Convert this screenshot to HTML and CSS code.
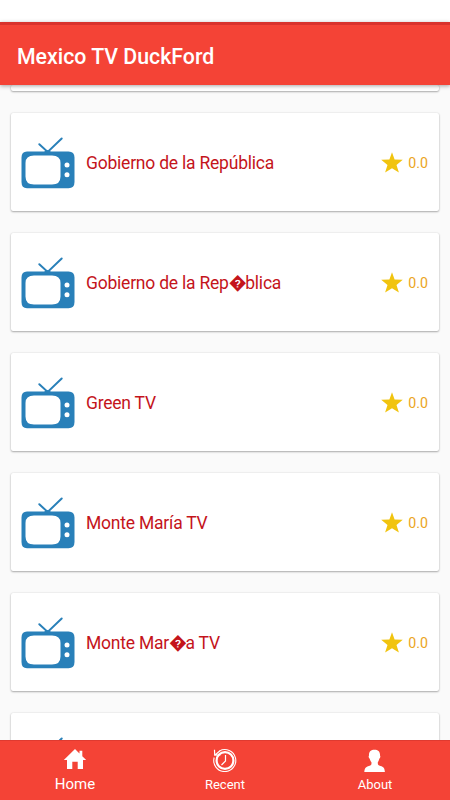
FILE: index.html
```html
<!DOCTYPE html>
<html lang="es">
<head>
<meta charset="utf-8">
<title>Mexico TV DuckFord</title>
<link rel="stylesheet" href="styles.css">
</head>
<body>
<svg class="defs" width="0" height="0" aria-hidden="true">
  <symbol id="tv" viewBox="0 0 54 52">
    <path d="M18.300 7.300 26.700 15 40.700 1.500" fill="none" stroke="#2980b9" stroke-width="2" stroke-linecap="round"/>
    <path fill="#2980b9" fill-rule="evenodd" d="M23 14.500 26.700 13 30 14.500H47.500Q53.500 14.500 53.500 20.500V45Q53.500 51.200 47.500 51.200H6Q.5 51.200 .5 45V20.500Q.5 14.500 6 14.500ZM13 18.500Q4.500 18.500 4.500 26V39.500Q4.500 47.500 13 47.500H31Q39.500 47.500 39.500 39.500V26Q39.500 18.500 31 18.500Z"/>
    <circle cx="46" cy="28" r="2.500" fill="#fff"/>
    <circle cx="46" cy="37.700" r="2.500" fill="#fff"/>
  </symbol>
  <symbol id="star" viewBox="0 0 22 21">
    <path fill="#f1c40f" d="M11 .3 13.600 7.600 21.800 7.800 15.500 12.900 17.900 20.600 11 16.200 4.100 20.600 6.500 12.900 .2 7.800 8.400 7.600Z"/>
  </symbol>
</svg>
<div class="app">
  <div class="status"></div>
  <header class="toolbar"><h1>Mexico TV DuckFord</h1></header>
  <main class="list">
    <article class="card card-prev"></article>
    <article class="card"><svg class="tv"><use href="#tv"/></svg><h2>Gobierno de la República</h2><svg class="star"><use href="#star"/></svg><span class="score">0.0</span></article>
    <article class="card"><svg class="tv"><use href="#tv"/></svg><h2>Gobierno de la Rep<span class="unknown">&#xFFFD;</span>blica</h2><svg class="star"><use href="#star"/></svg><span class="score">0.0</span></article>
    <article class="card"><svg class="tv"><use href="#tv"/></svg><h2>Green TV</h2><svg class="star"><use href="#star"/></svg><span class="score">0.0</span></article>
    <article class="card"><svg class="tv"><use href="#tv"/></svg><h2>Monte María TV</h2><svg class="star"><use href="#star"/></svg><span class="score">0.0</span></article>
    <article class="card"><svg class="tv"><use href="#tv"/></svg><h2>Monte Mar<span class="unknown">&#xFFFD;</span>a TV</h2><svg class="star"><use href="#star"/></svg><span class="score">0.0</span></article>
    <article class="card"><svg class="tv"><use href="#tv"/></svg></article>
  </main>
  <nav class="tabs">
    <div class="tab active">
      <svg class="tab-icon" viewBox="0 0 24 24"><path fill="#fff" d="M12 1 16.500 5.400V2.700H19.300V8.200L23.200 12H20V21H14.700V13.700H9.300V21H4V12H.8Z"/></svg>
      <span>Home</span>
    </div>
    <div class="tab">
      <svg class="tab-icon" viewBox="0 0 24 24" fill="none" stroke="#fff"><path stroke-width="1.100" d="M6.500 2.900A11 11 0 1 1 1.200 9.500"/><circle cx="12" cy="12.500" r="8.400" stroke-width="2.200"/><path stroke-width="1.200" d="M1.500 1.800 1.700 7.200 7.500 7M2 7 7 2.800M12.500 7V13L8.500 17"/></svg>
      <span>Recent</span>
    </div>
    <div class="tab">
      <svg class="tab-icon" viewBox="0 0 24 24"><path fill="#fff" d="M11.500 1.800C15.200 1.800 17.300 4 17 7.500 17.700 8.200 17.300 10 16.300 10.700 16 12.500 14.800 14 14.800 14.500 14.700 17 15.300 17.400 17.500 18 20.500 18.800 21.600 20 21.900 24H1.300C1.600 20 3 18.800 6 18 8.200 17.400 8.600 17 8.500 14.500 8.500 14 7 12.500 6.700 10.700 5.700 10 5.300 8.200 6 7.500 5.700 4 7.800 1.800 11.500 1.800Z"/></svg>
      <span>About</span>
    </div>
  </nav>
</div>
</body>
</html>
```

FILE: styles.css
```css
* { box-sizing: border-box; }
body { margin: 0; font-family: Roboto, "Liberation Sans", sans-serif; }
.defs { display: none; }
.app { display: flex; flex-direction: column; width: 450px; height: 800px; overflow: hidden; background: #fafafa; }
.status { flex: none; height: 22px; background: #fff; }
.toolbar { flex: none; z-index: 1; height: 63px; display: flex; align-items: center; padding: 3px 17px 0; background: #f44336; border-top: 3px solid #d9322c; box-shadow: 0 1px 4px rgba(0, 0, 0, .35); }
h1 { margin: 0; color: #fff; font-size: 21.300px; font-weight: 500; line-height: 28px; white-space: nowrap; }
.list { flex: 1; min-height: 0; overflow: hidden; display: flex; flex-direction: column; gap: 22px; padding: 0 11px; }
.card { flex: none; height: 98px; display: flex; align-items: center; padding: 0 11px 0 10px; background: #fff; border-radius: 2px; box-shadow: 0 1px 2px rgba(0, 0, 0, .3), 0 0 2px rgba(0, 0, 0, .12); }
.card-prev { height: 6px; }
.tv { width: 54px; height: 52px; margin-top: 2px; }
h2 { flex: 1; margin: 2px 0 0 11px; color: #c4141b; font-size: 17.500px; letter-spacing: -.22px; font-weight: 400; line-height: 24px; white-space: nowrap; }
.unknown { display: inline-block; width: 16.500px; }
.star { width: 22px; height: 21px; }
.score { margin: 2px 0 0 5px; color: #eba51c; font-size: 14.200px; line-height: 20px; }
.tabs { flex: none; z-index: 1; height: 60px; display: grid; grid-template-columns: repeat(3, 1fr); background: #f44336; border-top: 1px solid #df3a30; }
.tab { display: flex; flex-direction: column; align-items: center; padding-top: 7px; color: #fff; font-size: 13px; line-height: 20px; }
.tab-icon { width: 24px; height: 24px; margin-bottom: 3px; }
.active { font-size: 15px; }
.active span { margin-top: -1px; }
```
